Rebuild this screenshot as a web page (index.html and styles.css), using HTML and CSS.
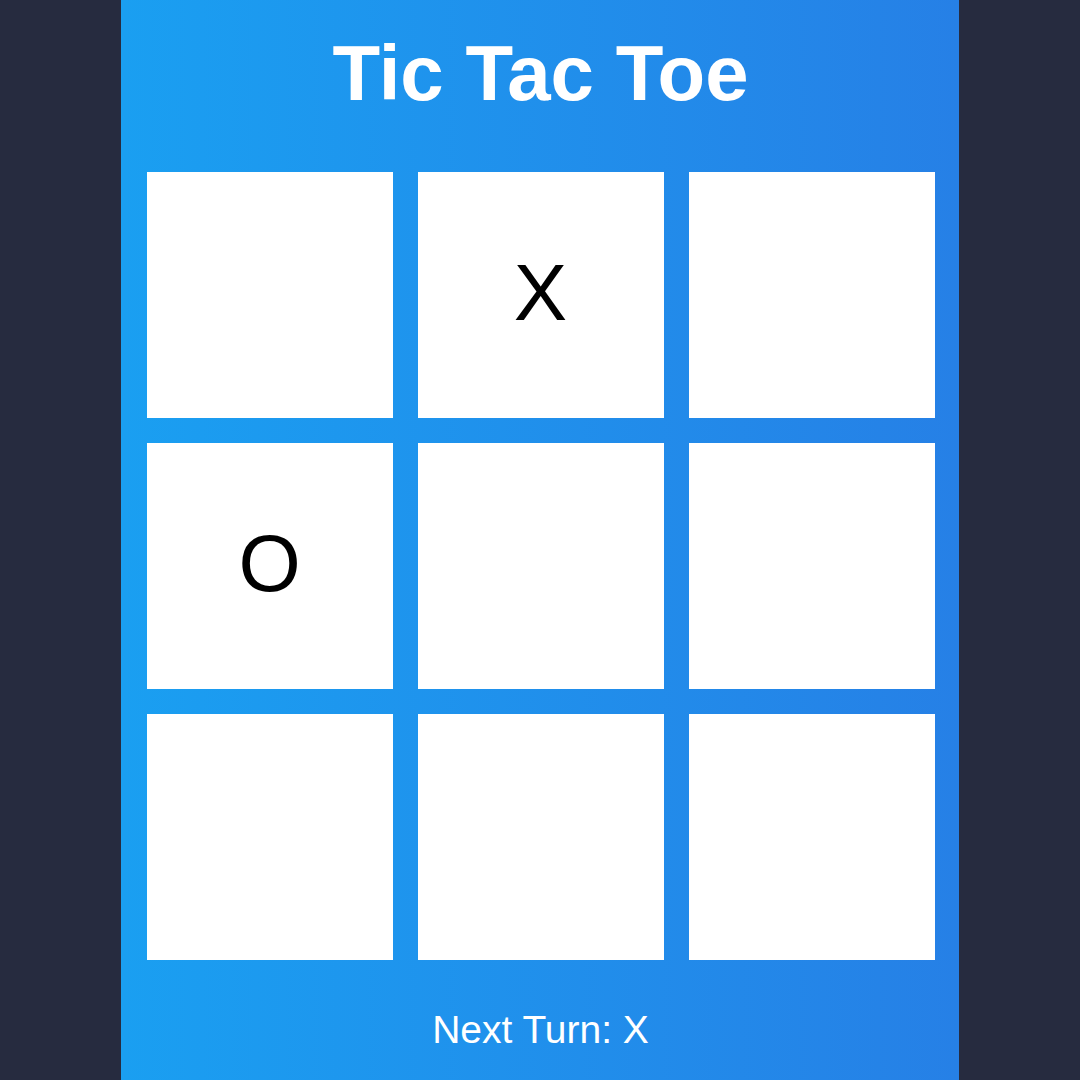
FILE: index.html
```html
<!DOCTYPE html>
<html>
<head>
<meta charset="utf-8">
<title>Tic Tac Toe</title>
<link rel="stylesheet" href="styles.css">
</head>
<body>
  <main class="app">
    <h1 class="title">Tic Tac Toe</h1>
    <div class="board">
      <div class="cell"></div>
      <div class="cell">X</div>
      <div class="cell"></div>
      <div class="cell">O</div>
      <div class="cell"></div>
      <div class="cell"></div>
      <div class="cell"></div>
      <div class="cell"></div>
      <div class="cell"></div>
    </div>
    <p class="status">Next Turn: X</p>
  </main>
</body>
</html>
```

FILE: styles.css
```css
html, body {
  margin: 0;
  padding: 0;
}

body {
  background: #262b3f;
  font-family: "Liberation Sans", Arial, sans-serif;
  display: flex;
  justify-content: center;
  min-height: 100vh;
}

.app {
  width: 838px;
  box-sizing: border-box;
  min-height: 1080px;
  padding: 0 25px 0 26px;
  background: linear-gradient(to right, #1a9ff1, #2680e6);
  display: flex;
  flex-direction: column;
  align-items: center;
}

.title {
  margin: 29px 0 53px;
  font-size: 78px;
  font-weight: bold;
  line-height: 1.15;
  color: #ffffff;
}

.board {
  display: grid;
  grid-template-columns: repeat(3, 246px);
  grid-template-rows: repeat(3, 246px);
  gap: 25px;
}

.cell {
  background: #ffffff;
  display: flex;
  align-items: center;
  justify-content: center;
  padding-bottom: 4px;
  box-sizing: border-box;
  font-size: 80px;
  color: #000000;
}

.status {
  margin: 48px 0 0;
  font-size: 39px;
  line-height: normal;
  color: #ffffff;
}
```
